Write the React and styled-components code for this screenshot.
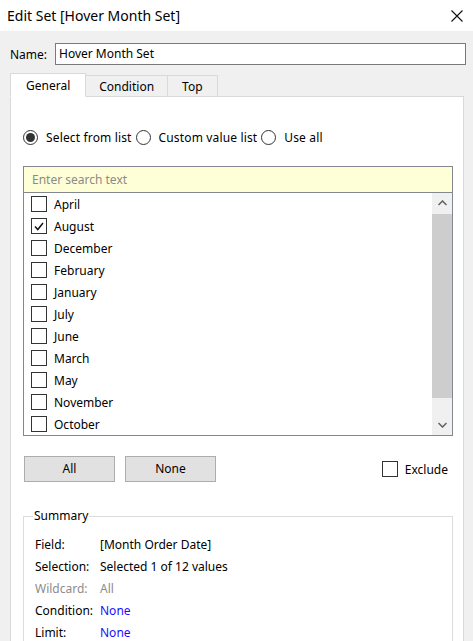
import React from "react";
import styled, { createGlobalStyle } from "styled-components";

const Global = createGlobalStyle`
  html, body {
    margin: 0;
    padding: 0;
    background: #f0f0f0;
  }
`;

const Window = styled.div`
  width: 473px;
  height: 641px;
  overflow: hidden;
  background: #f0f0f0;
  font-family: "Noto Sans", "Open Sans", sans-serif;
  font-size: 12px;
  color: #000;
`;

const TitleBar = styled.div`
  height: 31px;
  background: #fff;
  display: flex;
  align-items: center;
  justify-content: space-between;
  padding: 0 10px 0 7px;
  font-size: 14px;
  color: #000;
`;

const Content = styled.div`
  padding: 12px 7px 0 10px;
`;

const NameRow = styled.div`
  display: flex;
  align-items: center;
  height: 22px;
`;

const NameLabel = styled.span`
  width: 45px;
`;

const NameInput = styled.div`
  flex: 1;
  height: 20px;
  line-height: 20px;
  border: 1px solid #7a7a7a;
  background: #fff;
  padding-left: 3px;
`;

const Tabs = styled.div`
  display: flex;
  align-items: flex-end;
  margin-top: 8px;
  height: 24px;
  position: relative;
  z-index: 1;
`;

const Tab = styled.div`
  height: ${(p) => (p.active ? "24px" : "22px")};
  line-height: ${(p) => (p.active ? "24px" : "22px")};
  padding: 0 ${(p) => p.pad}px;
  border: 1px solid #d9d9d9;
  border-bottom: ${(p) => (p.active ? "1px solid #fff" : "1px solid #d9d9d9")};
  border-left: ${(p) => (p.first ? "1px solid #d9d9d9" : "none")};
  background: ${(p) => (p.active ? "#fff" : "#f0f0f0")};
  box-sizing: border-box;
  text-align: center;
`;

const Panel = styled.div`
  margin: -1px 2px 0 0;
  background: #fff;
  border: 1px solid #d9d9d9;
  padding: 31px 11px 0 12px;
  height: 600px;
`;

const RadioRow = styled.div`
  display: flex;
  align-items: center;
  height: 18px;
  letter-spacing: 0.15px;
`;

const RadioItem = styled.label`
  display: flex;
  align-items: center;
  margin-right: 4px;
`;

const RadioCircle = styled.span`
  width: 15px;
  height: 15px;
  border-radius: 50%;
  border: 1px solid #333;
  box-sizing: border-box;
  margin-right: 8px;
  display: flex;
  align-items: center;
  justify-content: center;
  &::after {
    content: "";
    width: 9px;
    height: 9px;
    border-radius: 50%;
    background: ${(p) => (p.checked ? "#333" : "transparent")};
  }
`;

const ListBox = styled.div`
  margin-top: 20px;
  border: 1px solid #828790;
  width: 430px;
  box-sizing: border-box;
`;

const Search = styled.div`
  height: 25px;
  line-height: 25px;
  background: #ffffd7;
  border-bottom: 1px solid #828790;
  color: #8a8a8a;
  padding-left: 8px;
`;

const ListBody = styled.div`
  display: flex;
  height: 242px;
`;

const Rows = styled.div`
  flex: 1;
`;

const Row = styled.div`
  display: flex;
  align-items: center;
  height: 22px;
  padding-left: 7px;
`;

const Box = styled.span`
  width: 16px;
  height: 16px;
  border: 1px solid #333;
  box-sizing: border-box;
  background: #fff;
  margin-right: ${(p) => p.gap}px;
  display: flex;
  align-items: center;
  justify-content: center;
`;

const Scrollbar = styled.div`
  width: 20px;
  background: #f0f0f0;
  display: flex;
  flex-direction: column;
`;

const Arrow = styled.div`
  height: 20px;
  display: flex;
  align-items: center;
  justify-content: center;
`;

const Thumb = styled.div`
  flex: 1;
  background: #cdcdcd;
  margin: 1px 0 17px;
`;

const ButtonRow = styled.div`
  display: flex;
  align-items: center;
  margin-top: 20px;
  width: 430px;
`;

const Button = styled.div`
  width: 91px;
  height: 26px;
  line-height: 24px;
  box-sizing: border-box;
  border: 1px solid #adadad;
  background: #e1e1e1;
  text-align: center;
  margin-right: 9px;
  margin-left: 1px;
`;

const ExcludeWrap = styled.label`
  margin-left: auto;
  margin-right: 5px;
  display: flex;
  align-items: center;
`;

const Fieldset = styled.fieldset`
  margin: 27px 0 0;
  width: 430px;
  box-sizing: border-box;
  border: 1px solid #dcdcdc;
  padding: 10px 0 0 11px;
`;

const Legend = styled.legend`
  padding: 0 1px;
  margin-left: -2px;
  line-height: 14px;
`;

const SumRow = styled.div`
  display: flex;
  align-items: center;
  height: 22px;
  color: ${(p) => (p.dim ? "#8c8c8c" : "#000")};
`;

const SumLabel = styled.span`
  width: 65px;
`;

const SumValue = styled.span`
  color: ${(p) => (p.link ? "#1a0dff" : "inherit")};
`;

const Chevron = ({ up }) => (
  <svg width="9" height="6" viewBox="0 0 9 6">
    <path
      d={up ? "M0.5 5 L4.5 1 L8.5 5" : "M0.5 1 L4.5 5 L8.5 1"}
      fill="none"
      stroke="#606060"
      strokeWidth="1.5"
    />
  </svg>
);

const Check = () => (
  <svg width="10" height="9" viewBox="0 0 10 9">
    <path d="M1 4.5 L3.8 7.5 L9 1" fill="none" stroke="#111" strokeWidth="1.5" />
  </svg>
);

const months = [
  "April",
  "August",
  "December",
  "February",
  "January",
  "July",
  "June",
  "March",
  "May",
  "November",
  "October",
];

export default function App() {
  return (
    <Window>
      <Global />
      <TitleBar>
        <span>Edit Set [Hover Month Set]</span>
        <svg width="12" height="12" viewBox="0 0 12 12">
          <path d="M0.5 0.5 L11.5 11.5 M11.5 0.5 L0.5 11.5" stroke="#111" strokeWidth="1.1" />
        </svg>
      </TitleBar>
      <Content>
        <NameRow>
          <NameLabel>Name:</NameLabel>
          <NameInput>Hover Month Set</NameInput>
        </NameRow>
        <Tabs>
          <Tab active first pad={15}>
            General
          </Tab>
          <Tab pad={13}>Condition</Tab>
          <Tab pad={14}>Top</Tab>
        </Tabs>
        <Panel>
          <RadioRow>
            <RadioItem>
              <RadioCircle checked />
              Select from list
            </RadioItem>
            <RadioItem>
              <RadioCircle />
              Custom value list
            </RadioItem>
            <RadioItem>
              <RadioCircle />
              Use all
            </RadioItem>
          </RadioRow>
          <ListBox>
            <Search>Enter search text</Search>
            <ListBody>
              <Rows>
                {months.map((m) => (
                  <Row key={m}>
                    <Box gap={7}>{m === "August" && <Check />}</Box>
                    {m}
                  </Row>
                ))}
              </Rows>
              <Scrollbar>
                <Arrow>
                  <Chevron up />
                </Arrow>
                <Thumb />
                <Arrow>
                  <Chevron />
                </Arrow>
              </Scrollbar>
            </ListBody>
          </ListBox>
          <ButtonRow>
            <Button>All</Button>
            <Button>None</Button>
            <ExcludeWrap>
              <Box gap={7} />
              Exclude
            </ExcludeWrap>
          </ButtonRow>
          <Fieldset>
            <Legend>Summary</Legend>
            <SumRow>
              <SumLabel>Field:</SumLabel>
              <SumValue>[Month Order Date]</SumValue>
            </SumRow>
            <SumRow>
              <SumLabel>Selection:</SumLabel>
              <SumValue>Selected 1 of 12 values</SumValue>
            </SumRow>
            <SumRow dim>
              <SumLabel>Wildcard:</SumLabel>
              <SumValue>All</SumValue>
            </SumRow>
            <SumRow>
              <SumLabel>Condition:</SumLabel>
              <SumValue link>None</SumValue>
            </SumRow>
            <SumRow>
              <SumLabel>Limit:</SumLabel>
              <SumValue link>None</SumValue>
            </SumRow>
          </Fieldset>
        </Panel>
      </Content>
    </Window>
  );
}
